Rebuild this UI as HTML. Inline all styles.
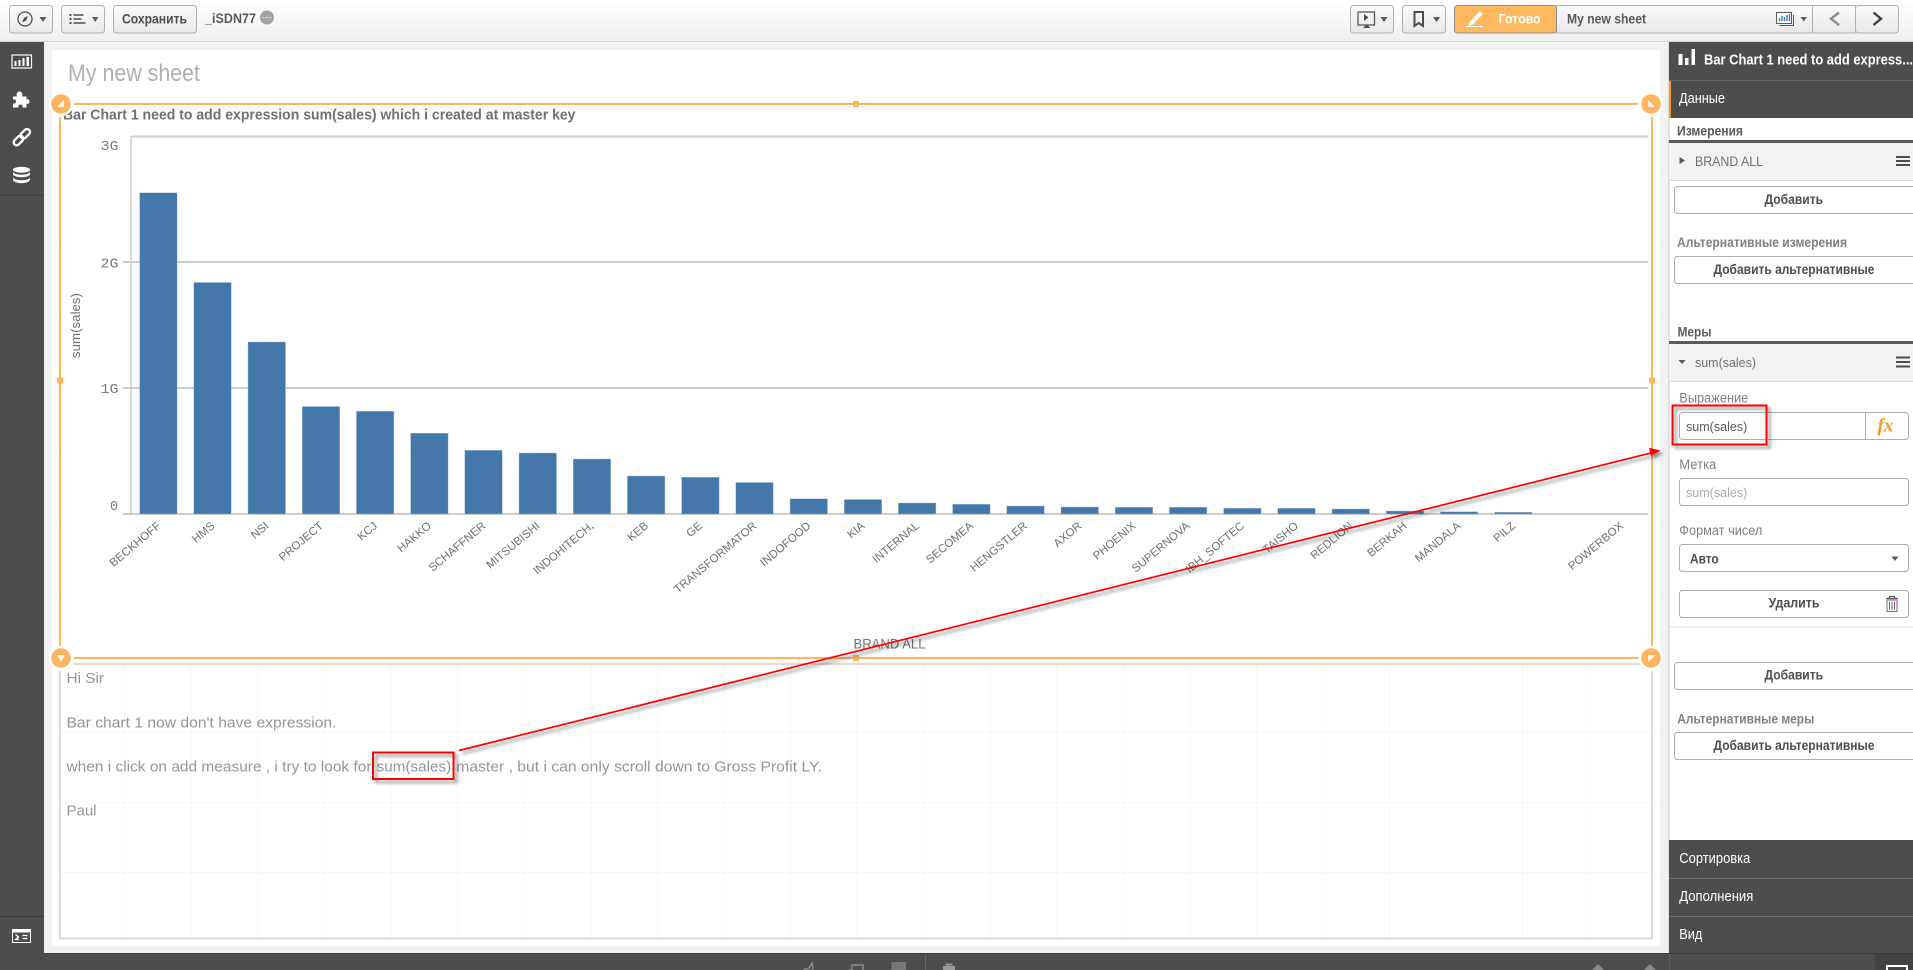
<!DOCTYPE html>
<html lang="ru">
<head>
<meta charset="utf-8">
<title>My new sheet</title>
<style>
html,body{margin:0;padding:0;width:1913px;height:970px;overflow:hidden;background:#f2f2f2}
svg{display:block;position:absolute;left:0;top:0}
text{font-family:"Liberation Sans","Noto Sans CJK SC",sans-serif;white-space:pre}
.b{font-weight:bold}
.ax{font-size:11.5px;fill:#707070}
.yl{font-size:14px;fill:#7a7a7a;font-family:"Liberation Mono","Liberation Sans",monospace}
.tb{font-size:15px;fill:#959595}
.btn{font-size:13.5px;font-weight:bold;fill:#4d4d4d}
.lab{font-size:13.5px;fill:#808080}
.hd{font-size:13.5px;font-weight:bold;fill:#595959}
.alt{font-size:13.5px;font-weight:bold;fill:#808080}
.wh{font-size:14.5px;fill:#fff}
.bar{fill:#4477aa;stroke:#a9c1d9;stroke-width:.4}
</style>
</head>
<body>
<svg width="1913" height="970" viewBox="0 0 1913 970" xmlns="http://www.w3.org/2000/svg">
<defs>
<linearGradient id="tg" x1="0" y1="0" x2="0" y2="1"><stop offset="0" stop-color="#ffffff"/><stop offset="1" stop-color="#f0f0f0"/></linearGradient>
<linearGradient id="bg" x1="0" y1="0" x2="0" y2="1"><stop offset="0" stop-color="#fbfbfb"/><stop offset="1" stop-color="#e8e8e8"/></linearGradient>
<pattern id="grid" patternUnits="userSpaceOnUse" x="57.9" y="102" width="66.55" height="70">
<path d="M.5 0V70M0 .5H66.55" stroke="#fef7ee" stroke-width="1" fill="none"/>
</pattern>
<filter id="sh" x="-5%" y="-20%" width="110%" height="140%"><feDropShadow dx="3" dy="3" stdDeviation="1.6" flood-color="#000" flood-opacity=".45"/></filter>
<clipPath id="pan"><rect x="1669" y="0" width="244" height="970"/></clipPath>
</defs>

<!-- base -->
<rect width="1913" height="970" fill="#f2f2f2"/>
<rect width="1913" height="41" fill="url(#tg)"/>
<rect y="41" width="1913" height="1" fill="#d4d4d4"/>

<!-- sidebar -->
<rect x="0" y="42" width="44" height="928" fill="#4d4d4d"/>
<rect x="0" y="194.5" width="44" height="1" fill="#3a3a3a"/>
<rect x="0" y="916" width="44" height="1" fill="#3a3a3a"/>
<rect x="12" y="55" width="19.5" height="13" fill="none" stroke="#fff" stroke-width="1.2"/>
<path d="M14.5 61h2v5h-2zM18.5 60h2v6h-2zM22.5 58h2v8h-2zM26.5 57h2.5v9h-2.5z" fill="#fff"/>
<path d="M13 97h4c-1-2 0-5 2.5-5s3.5 3 2.5 5h4.5v3c2-1 3 .5 3 2s-1 3-3 2v4h-4c.5-2-.5-3-2-3s-2.5 1-2 3h-5.500v-4c2 .5 3-.5 3-2s-1-2.5-3-2z" fill="#fff" transform="translate(0 -.5)"/>
<g transform="rotate(-45 22 137)" fill="none" stroke="#fff" stroke-width="2.4">
<rect x="11.5" y="134" width="11" height="6" rx="3"/>
<rect x="21" y="134" width="11" height="6" rx="3"/>
</g>
<ellipse cx="21.5" cy="169.800" rx="8.5" ry="3" fill="#fff"/>
<path d="M13 171.5c0 2 4 3.200 8.5 3.200s8.5-1.200 8.5-3.200v2.5c0 2-4 3.200-8.5 3.200S13 176 13 174z" fill="#fff"/>
<path d="M13 177c0 2 4 3.200 8.5 3.200s8.5-1.200 8.5-3.200v2.5c0 2-4 3.700-8.5 3.700S13 181.5 13 179.5z" fill="#fff"/>
<rect x="12.5" y="929.500" width="18" height="13" fill="#4d4d4d" stroke="#fff"/>
<rect x="12" y="929" width="19" height="3.5" fill="#fff"/>
<path d="M15.5 934.500l3 2.5-3 2.5h3.5M22.5 935.500h5M22.500 938.500h5" stroke="#fff" stroke-width="1.3" fill="none"/>

<!-- sheet -->
<rect x="52" y="50" width="1608" height="896" fill="#fff"/>
<rect x="52" y="102" width="1608" height="840" fill="url(#grid)"/>
<rect x="61" y="105" width="1590" height="552" fill="#fff"/>
<text x="68" y="81" font-size="24" fill="#b0b0b0" textLength="132" lengthAdjust="spacingAndGlyphs">My new sheet</text>

<!-- chart -->
<text x="63" y="119.500" font-size="15" class="b" fill="#707070" textLength="512.500" lengthAdjust="spacingAndGlyphs">Bar Chart 1 need to add expression sum(sales) which i created at master key</text>
<path d="M131 136.500H1648M122.500 262H1648M122.500 388H1648M122.500 514H1648" stroke="#cdcdcd" stroke-width="2" fill="none"/>
<path d="M131 136V514" stroke="#cdcdcd" stroke-width="1.5" fill="none"/>
<text x="100.500" y="150" class="yl" textLength="18" lengthAdjust="spacingAndGlyphs">3G</text>
<text x="100.500" y="267.500" class="yl" textLength="18" lengthAdjust="spacingAndGlyphs">2G</text>
<text x="100.500" y="393" class="yl" textLength="18" lengthAdjust="spacingAndGlyphs">1G</text>
<text x="110" y="510" class="yl" textLength="8" lengthAdjust="spacingAndGlyphs">0</text>
<text transform="translate(80 358) rotate(-90)" font-size="13" fill="#707070" textLength="65" lengthAdjust="spacingAndGlyphs">sum(sales)</text>

<rect class="bar" x="139.6" y="192.8" width="37.5" height="321.2"/>
<rect class="bar" x="193.8" y="282.5" width="37.5" height="231.5"/>
<rect class="bar" x="248" y="342" width="37.5" height="172"/>
<rect class="bar" x="302.2" y="406.5" width="37.5" height="107.5"/>
<rect class="bar" x="356.4" y="411.3" width="37.5" height="102.7"/>
<rect class="bar" x="410.6" y="433.3" width="37.5" height="80.7"/>
<rect class="bar" x="464.8" y="450.300" width="37.5" height="63.700"/>
<rect class="bar" x="519" y="453" width="37.5" height="61"/>
<rect class="bar" x="573.2" y="459" width="37.5" height="55"/>
<rect class="bar" x="627.4" y="476" width="37.5" height="38"/>
<rect class="bar" x="681.6" y="477.3" width="37.5" height="36.7"/>
<rect class="bar" x="735.8" y="482.5" width="37.5" height="31.5"/>
<rect class="bar" x="790" y="498.8" width="37.5" height="15.2"/>
<rect class="bar" x="844.2" y="499.5" width="37.5" height="14.5"/>
<rect class="bar" x="898.4" y="503" width="37.5" height="11"/>
<rect class="bar" x="952.6" y="504.3" width="37.5" height="9.7"/>
<rect class="bar" x="1006.8" y="506" width="37.5" height="8"/>
<rect class="bar" x="1061" y="507" width="37.5" height="7"/>
<rect class="bar" x="1115.2" y="507.3" width="37.5" height="6.7"/>
<rect class="bar" x="1169.4" y="507.3" width="37.5" height="6.7"/>
<rect class="bar" x="1223.6" y="508.3" width="37.5" height="5.7"/>
<rect class="bar" x="1277.8" y="508.3" width="37.5" height="5.7"/>
<rect class="bar" x="1332" y="509" width="37.5" height="5"/>
<rect class="bar" x="1386.2" y="511" width="37.5" height="3"/>
<rect class="bar" x="1440.4" y="511.7" width="37.5" height="2.3"/>
<rect class="bar" x="1494.6" y="512.3" width="37.5" height="1.7"/>

<g class="ax" text-anchor="end">
<text transform="translate(161.5 527) rotate(-40)">BECKHOFF</text>
<text transform="translate(215.5 527) rotate(-40)">HMS</text>
<text transform="translate(269.5 527) rotate(-40)">NSI</text>
<text transform="translate(324 527) rotate(-40)">PROJECT</text>
<text transform="translate(378 527) rotate(-40)">KCJ</text>
<text transform="translate(432 527) rotate(-40)">HAKKO</text>
<text transform="translate(486.5 527) rotate(-40)">SCHAFFNER</text>
<text transform="translate(540.5 527) rotate(-40)">MITSUBISHI</text>
<text transform="translate(594.5 527) rotate(-40)">INDOHITECH,</text>
<text transform="translate(649 527) rotate(-40)">KEB</text>
<text transform="translate(703 527) rotate(-40)">GE</text>
<text transform="translate(757.5 527) rotate(-40)">TRANSFORMATOR</text>
<text transform="translate(811.5 527) rotate(-40)">INDOFOOD</text>
<text transform="translate(865.5 527) rotate(-40)">KIA</text>
<text transform="translate(920 527) rotate(-40)">INTERNAL</text>
<text transform="translate(974 527) rotate(-40)">SECOMEA</text>
<text transform="translate(1028 527) rotate(-40)">HENGSTLER</text>
<text transform="translate(1082.5 527) rotate(-40)">AXOR</text>
<text transform="translate(1136.5 527) rotate(-40)">PHOENIX</text>
<text transform="translate(1190.5 527) rotate(-40)">SUPERNOVA</text>
<text transform="translate(1245 527) rotate(-40)">IBH_SOFTEC</text>
<text transform="translate(1299 527) rotate(-40)">TAISHO</text>
<text transform="translate(1353.5 527) rotate(-40)">REDLION</text>
<text transform="translate(1407.5 527) rotate(-40)">BERKAH</text>
<text transform="translate(1461.5 527) rotate(-40)">MANDALA</text>
<text transform="translate(1516 527) rotate(-40)">PILZ</text>
<text transform="translate(1624 527) rotate(-40)">POWERBOX</text>
</g>
<text x="853.5" y="648.5" font-size="14" fill="#707070" textLength="72" lengthAdjust="spacingAndGlyphs">BRAND ALL</text>

<!-- text box -->
<path d="M74 664H1640" stroke="#dcdcdc" stroke-width="2"/>
<path d="M60 671V938.5H1652V671" stroke="#dcdcdc" stroke-width="2" fill="none"/>
<text x="66.5" y="683" class="tb" textLength="37.5" lengthAdjust="spacingAndGlyphs">Hi Sir</text>
<text x="66.5" y="727.5" class="tb" textLength="270" lengthAdjust="spacingAndGlyphs">Bar chart 1 now don't have expression.</text>
<text x="66.5" y="771.5" class="tb" textLength="305" lengthAdjust="spacingAndGlyphs">when i click on add measure , i try to look for</text>
<text x="376.7" y="771.5" class="tb" textLength="74.5" lengthAdjust="spacingAndGlyphs">sum(sales)</text>
<text x="456.3" y="771.5" class="tb" textLength="365.5" lengthAdjust="spacingAndGlyphs">master , but i can only scroll down to Gross Profit LY.</text>
<text x="66.5" y="815.5" class="tb" textLength="30" lengthAdjust="spacingAndGlyphs">Paul</text>

<!-- selection frame -->
<g fill="#fdb55f">
<rect x="74" y="103" width="1564" height="2"/>
<rect x="74" y="657" width="1565" height="2"/>
<rect x="59" y="117" width="2" height="529"/>
<rect x="1651" y="117" width="2" height="529"/>
<rect x="853" y="101" width="6" height="6"/>
<rect x="853" y="655" width="6" height="6"/>
<rect x="57" y="377.5" width="6" height="6"/>
<rect x="1649" y="377.5" width="6" height="6"/>
</g>
<g fill="#fdb55f" stroke="#fff" stroke-width="2.5">
<circle cx="61" cy="104" r="11"/>
<circle cx="1651" cy="104" r="11"/>
<circle cx="61" cy="658" r="11"/>
<circle cx="1651" cy="658" r="11"/>
</g>
<path d="M57 107l7-7v7zM1648 100v7h7zM57 655h8l-4 7zM1648 655h8l-8 7z" fill="#fff" opacity=".85"/>

<!-- top bar controls -->
<g fill="url(#bg)" stroke="#b0b0b0" stroke-width="1">
<rect x="9.5" y="5.5" width="43" height="27.5" rx="3"/>
<rect x="61.5" y="5.5" width="43" height="27.5" rx="3"/>
<rect x="113.5" y="5.5" width="83" height="27.5" rx="3"/>
<rect x="1350.5" y="5.5" width="43" height="27.5" rx="3"/>
<rect x="1402.5" y="5.5" width="43" height="27.5" rx="3"/>
<rect x="1556.5" y="5.5" width="256" height="27.5"/>
<rect x="1812.5" y="5.5" width="43" height="27.5"/>
<rect x="1855.5" y="5.5" width="43" height="27.5" rx="3"/>
</g>
<rect x="1454.5" y="5.5" width="102" height="27.5" rx="3" fill="#fdb860" stroke="#8f8f8f"/>

<circle cx="25" cy="19" r="7" fill="none" stroke="#4d4d4d" stroke-width="1.3"/>
<path d="M28 16l-1.800 4.500-4 1.800 1.800-4.500zM24.500 19.500l1-1" fill="#4d4d4d"/>
<path d="M39.500 17h7l-3.500 5zM92 17h6.500l-3.250 5zM1380.500 17h7l-3.500 5zM1433 17h7l-3.500 5zM1800.500 17h6.500l-3.250 4.500z" fill="#595959"/>
<path d="M69.500 14h2v2h-2zM69.500 18h2v2h-2zM69.500 22h2v2h-2zM73.500 14.300h10v1.400h-10zM73.500 18.300h8v1.400h-8zM73.500 22.300h12v1.400h-12z" fill="#4d4d4d"/>
<text x="122" y="23.5" class="btn" textLength="65" lengthAdjust="spacingAndGlyphs">Сохранить</text>
<text x="205" y="23" font-size="14" class="b" fill="#595959" textLength="51" lengthAdjust="spacingAndGlyphs">_iSDN77</text>
<circle cx="267" cy="17.5" r="7" fill="#a3a3a3"/>
<path d="M262.5 17.5h2M266 17.5h2M269.5 17.5h2" stroke="#e4e4e4" stroke-width="1"/>

<rect x="1358" y="12" width="16.5" height="13" fill="none" stroke="#4d4d4d" stroke-width="1.2"/>
<path d="M1364 14v7l4.500-3.500zM1363 28l3.200-3h1l3.200 3" fill="#4d4d4d"/>
<path d="M1367 25v2" stroke="#4d4d4d"/>
<path d="M1414.5 12h8.500v14l-4.250-3-4.250 3z" fill="none" stroke="#4d4d4d" stroke-width="2"/>

<path d="M1480 11l3 3-10 10.500-4.500 1.500 1.500-4.500z" fill="#fff"/>
<path d="M1466 26.500h17" stroke="#fff" stroke-width="1"/>
<text x="1498.6" y="23.5" font-size="14" class="b" fill="#fff" textLength="42" lengthAdjust="spacingAndGlyphs">Готово</text>
<text x="1567" y="23.5" font-size="14" class="b" fill="#595959" textLength="79" lengthAdjust="spacingAndGlyphs">My new sheet</text>
<rect x="1776.5" y="12.5" width="15" height="11" fill="#fff" stroke="#595959"/>
<path d="M1779.500 21v-3M1782 21v-5M1784.500 21v-4M1787 21v-6M1789.500 21v-7" stroke="#4477aa" stroke-width="1.4"/>
<path d="M1793.500 15v10.500h-14" stroke="#595959" fill="none"/>
<path d="M1839 12.500l-8 6.250 8 6.250" fill="none" stroke="#8c8c8c" stroke-width="2.4"/>
<path d="M1873.500 12.500l7.500 6.250-7.500 6.250" fill="none" stroke="#404040" stroke-width="2.4"/>

<!-- right panel -->
<rect x="1668.5" y="42" width="245" height="911.5" fill="#fff"/>
<rect x="1668.5" y="42" width="1" height="911.5" fill="#c8c8c8"/>
<rect x="1669" y="42" width="244" height="76" fill="#4d4d4d"/>
<rect x="1669" y="80" width="244" height="1" fill="#666"/>
<rect x="1669" y="81" width="2" height="37" fill="#f8981d"/>
<path d="M1678.5 54h4v11h-4zM1685 58h3.500v7h-3.500zM1691.500 49h3.500v16h-3.500z" fill="#fff"/>
<text x="1704" y="64.5" font-size="15" class="b" fill="#fff" textLength="209" lengthAdjust="spacingAndGlyphs">Bar Chart 1 need to add express...</text>
<text x="1679" y="103" class="wh" textLength="46" lengthAdjust="spacingAndGlyphs">Данные</text>

<text x="1677" y="135.5" class="hd" textLength="66" lengthAdjust="spacingAndGlyphs">Измерения</text>
<rect x="1669" y="140" width="244" height="3" fill="#595959"/>
<rect x="1669" y="143" width="244" height="37" fill="#f2f2f2"/>
<rect x="1669" y="180" width="244" height="1" fill="#dcdcdc"/>
<path d="M1679.500 157v7l5.500-3.500z" fill="#595959"/>
<text x="1695" y="166" font-size="13.5" fill="#707070" textLength="68" lengthAdjust="spacingAndGlyphs">BRAND ALL</text>
<path d="M1896 156h14v2h-14zM1896 160h14v2h-14zM1896 164h14v2h-14z" fill="#4d4d4d"/>

<g clip-path="url(#pan)" fill="#fff" stroke="#adadad">
<rect x="1674.5" y="186.5" width="260" height="27" rx="3"/>
<rect x="1674.5" y="256.5" width="260" height="27" rx="3"/>
<rect x="1674.5" y="662.5" width="260" height="27" rx="3"/>
<rect x="1674.5" y="732.5" width="260" height="27" rx="3"/>
</g>
<text x="1764.5" y="204" class="btn" textLength="58.6" lengthAdjust="spacingAndGlyphs">Добавить</text>
<text x="1677" y="247" class="alt" textLength="170" lengthAdjust="spacingAndGlyphs">Альтернативные измерения</text>
<text x="1713.5" y="274" class="btn" textLength="161" lengthAdjust="spacingAndGlyphs">Добавить альтернативные</text>

<text x="1677.5" y="336.5" class="hd" textLength="34" lengthAdjust="spacingAndGlyphs">Меры</text>
<rect x="1669" y="341" width="244" height="3" fill="#595959"/>
<rect x="1669" y="344" width="244" height="37" fill="#f2f2f2"/>
<rect x="1669" y="381" width="244" height="1" fill="#dcdcdc"/>
<path d="M1678.500 360h7l-3.500 4z" fill="#595959"/>
<text x="1695" y="367" font-size="13" fill="#707070" textLength="61" lengthAdjust="spacingAndGlyphs">sum(sales)</text>
<path d="M1896 356.500h14v2h-14zM1896 361h14v2h-14zM1896 365.500h14v2h-14z" fill="#4d4d4d"/>

<text x="1679.3" y="402.5" class="lab" textLength="69" lengthAdjust="spacingAndGlyphs">Выражение</text>
<rect x="1679.5" y="412.5" width="229" height="27" rx="3" fill="#fff" stroke="#adadad"/>
<path d="M1865.5 412.5v27" stroke="#adadad"/>
<text x="1686" y="431" font-size="13" fill="#595959" textLength="61.3" lengthAdjust="spacingAndGlyphs">sum(sales)</text>
<text x="1877.5" y="431.5" font-style="italic" font-weight="bold" font-size="19" fill="#f8981d" style="font-family:'Liberation Serif',serif">fx</text>

<text x="1679.3" y="469" class="lab" textLength="37" lengthAdjust="spacingAndGlyphs">Метка</text>
<rect x="1679.5" y="478.5" width="229" height="27" rx="3" fill="#fff" stroke="#adadad"/>
<text x="1686" y="497" font-size="13" fill="#ababab" textLength="61.3" lengthAdjust="spacingAndGlyphs">sum(sales)</text>

<text x="1679.3" y="535" class="lab" textLength="83" lengthAdjust="spacingAndGlyphs">Формат чисел</text>
<rect x="1679.5" y="544.5" width="229" height="27" rx="3" fill="#fff" stroke="#adadad"/>
<text x="1690" y="563.5" class="btn" textLength="28.7" lengthAdjust="spacingAndGlyphs">Авто</text>
<path d="M1891.500 556.500h7l-3.500 4.500z" fill="#595959"/>

<rect x="1679.5" y="590.5" width="229" height="27" rx="3" fill="#fff" stroke="#adadad"/>
<text x="1768.5" y="607.5" class="btn" textLength="51" lengthAdjust="spacingAndGlyphs">Удалить</text>
<path d="M1886 598.500h12M1889.500 598.500v-2h5v2" stroke="#595959" stroke-width="1.3" fill="none"/>
<path d="M1887 600h10v11.500h-10zM1889.500 601.500v8.500M1892 601.500v8.500M1894.500 601.500v8.500" stroke="#8a5f8a" stroke-width="1" fill="none"/>
<rect x="1669" y="626.5" width="244" height="1" fill="#dcdcdc"/>

<text x="1764.5" y="679.5" class="btn" textLength="58.6" lengthAdjust="spacingAndGlyphs">Добавить</text>
<text x="1677.3" y="723.5" class="alt" textLength="137" lengthAdjust="spacingAndGlyphs">Альтернативные меры</text>
<text x="1713.5" y="750" class="btn" textLength="161" lengthAdjust="spacingAndGlyphs">Добавить альтернативные</text>

<rect x="1669" y="840" width="244" height="114" fill="#4d4d4d"/>
<rect x="1669" y="878" width="244" height="1" fill="#6a6a6a"/>
<rect x="1669" y="916" width="244" height="1" fill="#6a6a6a"/>
<text x="1679.3" y="863" class="wh" textLength="71" lengthAdjust="spacingAndGlyphs">Сортировка</text>
<text x="1679.3" y="901" class="wh" textLength="74" lengthAdjust="spacingAndGlyphs">Дополнения</text>
<text x="1679.3" y="939" class="wh" textLength="23" lengthAdjust="spacingAndGlyphs">Вид</text>

<!-- bottom bar -->
<rect x="0" y="954" width="1913" height="16" fill="#4d4d4d"/>
<rect x="44" y="953" width="1869" height="1" fill="#3a3a3a"/>
<rect x="1669" y="954" width="1" height="16" fill="#5f5f5f"/>
<rect x="1875" y="954" width="38" height="16" fill="#424242"/>
<rect x="1887" y="966" width="20" height="6" fill="none" stroke="#fff" stroke-width="2"/>
<path d="M803 970l6-2 3-5 1 7M848 970h4v-5h11v5" stroke="#8c8c8c" stroke-width="1.5" fill="none"/>
<rect x="891.5" y="962" width="14.5" height="8" fill="#777"/>
<rect x="925" y="954" width="1" height="16" fill="#666"/>
<path d="M943 966h12v4h-12zM945.500 963.500h7v2h-7z" fill="#999"/>
<path d="M1598 964l-6 6h12zM1650 964l6 6h-12z" fill="#8a8a8a"/>

<!-- annotations -->
<g filter="url(#sh)">
<rect x="373" y="752.5" width="80.5" height="26.5" fill="none" stroke="#ff0000" stroke-width="2"/>
<rect x="1672.5" y="405.5" width="94" height="39" fill="none" stroke="#ff0000" stroke-width="2"/>
<path d="M459 750.500L1652 452.700" stroke="#ff0000" stroke-width="1.7" fill="none"/>
<path d="M1660.700 450.500L1649 447.800l1.900 8.200z" fill="#ff0000"/>
</g>
</svg>
</body>
</html>
